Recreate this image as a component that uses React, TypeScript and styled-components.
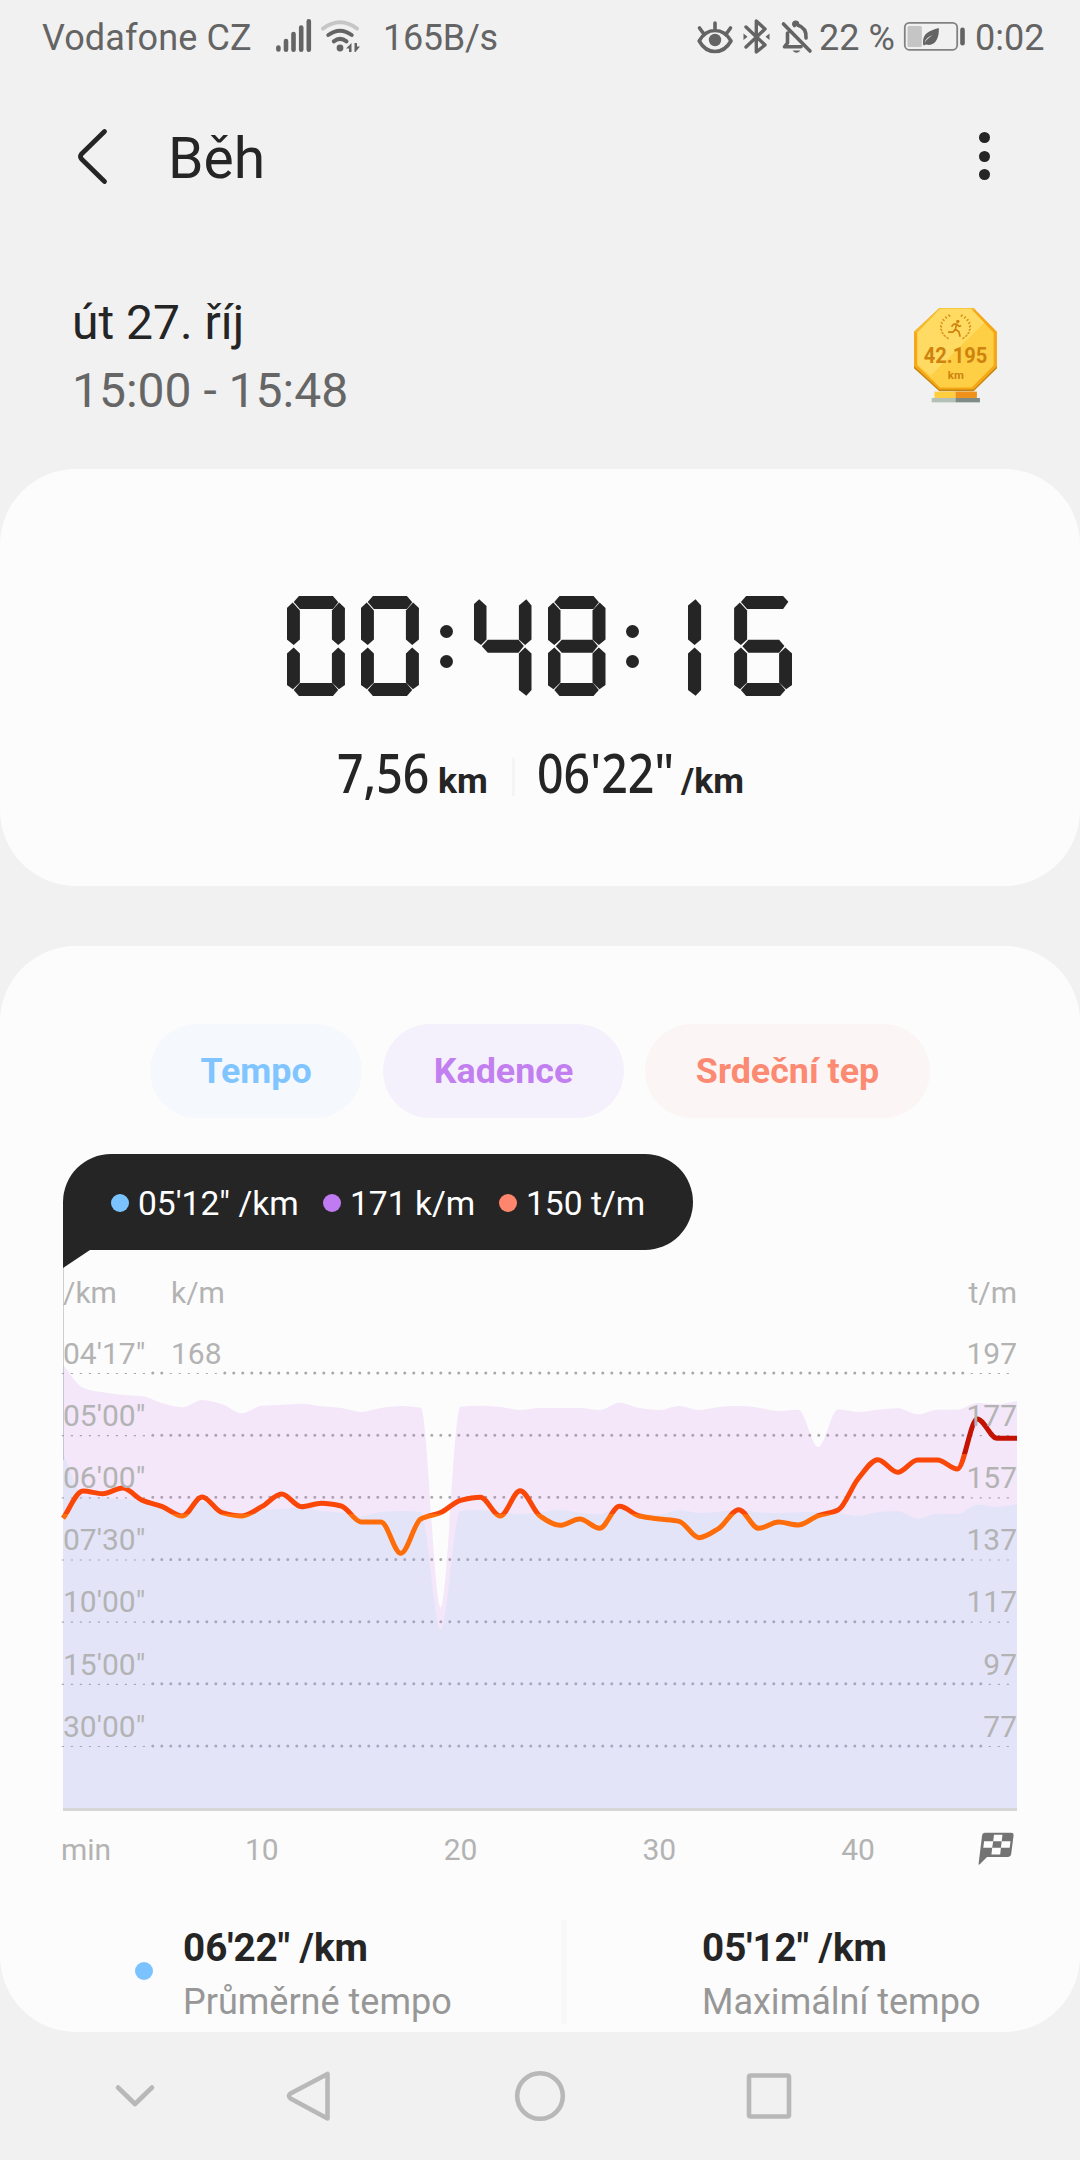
import React from "react";
import styled, { createGlobalStyle, css } from "styled-components";

const GlobalStyle = createGlobalStyle`
  * { box-sizing: border-box; }
  body { margin: 0; background: #f1f1f1; font-family: Roboto, "Liberation Sans", sans-serif; color: #252525; }
`;

const Screen = styled.main`
  width: 1080px;
  height: 2160px;
  display: flex;
  flex-direction: column;
  background: #f1f1f1;
  overflow: hidden;
`;

/* ---------- status bar ---------- */

const StatusBar = styled.header`
  height: 76px;
  display: flex;
  justify-content: space-between;
  padding: 0 34px 0 42px;
  color: #646464;
  font-size: 36px;
  line-height: 76px;
  white-space: nowrap;
`;
const StatusSide = styled.div`
  display: flex;
`;
const StatusText = styled.span<{ $w: number; $track?: number }>`
  width: ${(p) => p.$w}px;
  letter-spacing: ${(p) => p.$track ?? 0}px;
`;
const StatusIcon = styled.svg`
  flex: none;
  height: 76px;
  display: block;
`;

/* ---------- app bar ---------- */

const AppBar = styled.nav`
  height: 165px;
  display: flex;
  align-items: center;
  padding: 0 82px 0 74px;
`;
const BackIcon = styled.svg`
  width: 40px;
  height: 60px;
  margin-bottom: 5px;
`;
const Title = styled.h1`
  margin: 0 0 0 54px;
  flex: 1;
  font-size: 57px;
  font-weight: 400;
  line-height: 165px;
`;
const Kebab = styled.div`
  width: 28px;
  display: flex;
  flex-direction: column;
  align-items: center;
  gap: 7.6px;
  margin-bottom: 5px;
  i { width: 11px; height: 11px; border-radius: 50%; background: #252525; }
`;

/* ---------- summary ---------- */

const Summary = styled.section`
  height: 228px;
  display: flex;
  justify-content: space-between;
  padding: 48px 83px 0 72px;
`;
const DateBlock = styled.div`
  font-size: 48px;
  line-height: 68px;
`;
const TimeRange = styled.div`
  color: #666;
`;
const Trophy = styled.svg`
  width: 83px;
  height: 95px;
  margin-top: 19px;
`;

const Card = styled.section<{ $h: number }>`
  flex: none;
  height: ${(p) => p.$h}px;
  border-radius: 76px;
  background: #fcfcfc;
`;
const TimerCard = styled(Card)`
  padding-top: 127px;
  margin-bottom: 60px;
`;
const ChartCard = styled(Card)`
  padding: 78px 63px 0;
`;

/* ---------- seven-segment timer ---------- */

const Timer = styled.div`
  display: flex;
  justify-content: center;
  gap: 20.8px;
  height: 100px;
  margin-right: 1px;
`;
const Pair = styled.div`
  display: flex;
  gap: 16px;
`;
const Digit = styled.div`
  position: relative;
  width: 58px;
  height: 100px;
`;
const Segment = styled.i<{ $shape: string }>`
  position: absolute;
  inset: 0;
  background: #252525;
  clip-path: polygon(${(p) => p.$shape});
`;
const Colon = styled.div`
  width: 13px;
  padding-top: 29px;
  display: flex;
  flex-direction: column;
  gap: 17px;
  i { width: 13px; height: 13px; border-radius: 50%; background: #252525; }
`;

const seg = (...pts: number[][]) => pts.map(([x, y]) => `${x}px ${y}px`).join(", ");
const A = seg([6.8, 6], [12, 0], [46, 0], [51.4, 6.3], [46, 13], [13, 13]);
const A_OPEN = seg([6.8, 6], [12, 0], [49, 0], [54.3, 5.7], [49, 13], [13, 13]);
const F = seg([0, 12], [5.8, 6.5], [13, 14.5], [13, 43.5], [6.8, 49], [0, 43.5]);
const F_OPEN = seg([0, 8.5], [5.7, 3.3], [13, 10], [13, 43.5], [7.5, 49], [0, 43.5]);
const B = seg([58, 12], [52.2, 6.5], [45, 14.5], [45, 43.5], [51.3, 49], [58, 43.5]);
const B_OPEN = seg([58, 9.5], [52.8, 3.3], [45.4, 9.5], [45.4, 43.5], [51.6, 49], [58, 43.5]);
const E = seg([6.8, 51.5], [13, 57.5], [13, 86.5], [6, 93.3], [0, 89], [0, 57.5]);
const C = seg([51.3, 51.5], [45, 57.5], [45, 86.5], [52, 93.3], [58, 89], [58, 57.5]);
const C_OPEN = seg([51.6, 51.5], [45.4, 57.5], [45.4, 94], [52.8, 99.7], [58, 94], [58, 57.5]);
const D = seg([6.8, 94], [13, 87], [45.5, 87], [51.3, 94], [46, 100], [12, 100]);
const G = seg([8.3, 50.3], [14.3, 43.7], [45, 43.7], [50.3, 50], [45, 56.7], [14.3, 56.7]);
const ONE_TOP = seg([27.9, 9.5], [35.4, 3.3], [41, 9.5], [41, 43.5], [34.5, 49], [27.9, 43.5]);
const ONE_BOTTOM = seg([34.5, 51.5], [41, 57.5], [41, 94], [35.5, 99.7], [27.9, 94], [27.9, 57.5]);

const SEGMENTS: Record<string, string[]> = {
  "0": [A, B, C, D, E, F],
  "1": [ONE_TOP, ONE_BOTTOM],
  "4": [F_OPEN, G, B_OPEN, C_OPEN],
  "6": [A_OPEN, F, G, E, D, C],
  "8": [A, B, C, D, E, F, G],
};

function SevenSegment({ value }: { value: string }) {
  return (
    <Timer role="img" aria-label={value}>
      {value.split(":").map((pair, i) => (
        <React.Fragment key={i}>
          {i > 0 && <Colon><i /><i /></Colon>}
          <Pair>
            {pair.split("").map((d, j) => (
              <Digit key={j}>
                {SEGMENTS[d].map((s, k) => <Segment key={k} $shape={s} />)}
              </Digit>
            ))}
          </Pair>
        </React.Fragment>
      ))}
    </Timer>
  );
}

const Metrics = styled.div`
  display: flex;
  align-items: baseline;
  padding-left: 337px;
  margin-top: 38px;
  line-height: 76px;
  white-space: nowrap;
`;
const MetricValue = styled.span<{ $w: number }>`
  width: ${(p) => p.$w}px;
  font-family: "Noto Sans", sans-serif;
  font-size: 54px;
  font-weight: 500;
  transform: scaleX(0.86);
  transform-origin: left;
`;
const MetricUnit = styled.span<{ $w: number }>`
  width: ${(p) => p.$w}px;
  font-size: 35.5px;
  font-weight: 700;
`;
const MetricDivider = styled.span`
  width: 3px;
  height: 38px;
  margin-right: 22px;
  align-self: center;
  background: #f5f5f5;
`;

/* ---------- chart ---------- */

const Chips = styled.div`
  display: flex;
  justify-content: center;
  gap: 21px;
`;
const Chip = styled.button<{ $w: number; $fg: string; $bg: string }>`
  width: ${(p) => p.$w}px;
  height: 94px;
  border: 0;
  padding: 1px 0 0;
  border-radius: 47px;
  font: 700 35.8px/93px Roboto, sans-serif;
  color: ${(p) => p.$fg};
  background: ${(p) => p.$bg};
`;
const Tooltip = styled.div`
  position: relative;
  width: 630px;
  height: 96px;
  margin-top: 36px;
  padding: 3px 0 0 48px;
  display: flex;
  align-items: center;
  border-radius: 48px 48px 48px 0;
  background: #252525;
  color: #fff;
  font-size: 33.6px;
  white-space: nowrap;
  &::after {
    content: "";
    position: absolute;
    left: 0;
    top: 95px;
    width: 27px;
    height: 19px;
    background: #252525;
    clip-path: polygon(0 0, 100% 0, 100% 1px, 0 100%);
  }
`;
const Reading = styled.span<{ $w: number }>`
  width: ${(p) => p.$w}px;
  display: flex;
  align-items: center;
  gap: 9px;
  i { margin-bottom: 2px; }
`;
const Dot = styled.i<{ $c: string }>`
  flex: none;
  width: 18px;
  height: 18px;
  border-radius: 50%;
  background: ${(p) => p.$c};
`;
const Plot = styled.div`
  display: grid;
  height: 561px;
  > * { grid-area: 1 / 1; }
`;
const Curves = styled.svg`
  width: 954px;
  height: 561px;
  display: block;
  overflow: visible;
`;
const axisText = css`
  color: #b3b3b3;
  font-size: 30px;
`;
const Scale = styled.div`
  ${axisText}
  height: 561px;
  z-index: 1;
`;
const ScaleRow = styled.div<{ $h: number }>`
  height: ${(p) => p.$h}px;
  padding-top: 23px;
  line-height: 40px;
  display: grid;
  grid-template-columns: 108px 1fr auto;
  white-space: nowrap;
`;
const TimeAxis = styled.div`
  ${axisText}
  display: flex;
  height: 75px;
  line-height: 77px;
`;
const AxisUnit = styled.span`
  width: 99.4px;
  margin-left: -2px;
  margin-right: 2px;
`;
const Tick = styled.span`
  width: 198.75px;
  text-align: center;
`;
const Flag = styled.svg`
  width: 37px;
  height: 34px;
  margin: 21px 0 0 20.500px;
`;

const monotone = (ys: number[], step: number) => {
  const n = ys.length;
  const d = ys.slice(1).map((y, i) => (y - ys[i]) / step);
  const m = ys.map((_, i) => {
    if (i === 0) return d[0];
    if (i === n - 1) return d[n - 2];
    const a = d[i - 1];
    const b = d[i];
    return a * b <= 0 ? 0 : (2 * a * b) / (a + b);
  });
  let path = `M0 ${ys[0]}`;
  for (let i = 0; i < n - 1; i++) {
    const x0 = i * step;
    const x1 = x0 + step;
    path += `C${x0 + step / 3} ${ys[i] + (m[i] * step) / 3} ${x1 - step / 3} ${ys[i + 1] - (m[i + 1] * step) / 3} ${x1} ${ys[i + 1]}`;
  }
  return path;
};

/* samples are stored in thirds of a pixel below y = 70 */
const toY = (v: number) => 70 + v / 3;
const HEART = [595, 513, 521, 504, 541, 560, 588, 531, 578, 588, 560, 522, 560, 550, 558, 606, 606, 700, 597, 578, 541, 532, 588, 512, 588, 616, 597, 625, 559, 588, 597, 604, 653, 625, 569, 625, 606, 615, 587, 570, 477, 419, 457, 420, 420, 447, 297, 355, 355].map(toY);
const CADENCE = [135, 203, 217, 225, 229, 250, 262, 240, 253, 280, 257, 254, 251, 259, 264, 276, 264, 258, 263, 862, 260, 257, 261, 270, 264, 264, 264, 270, 248, 264, 270, 258, 270, 261, 258, 263, 273, 269, 381, 268, 276, 269, 265, 283, 269, 269, 249, 253, 243].map(toY);
const PACE = [398, 528, 533, 538, 543, 558, 575, 546, 565, 590, 568, 567, 560, 573, 578, 588, 576, 573, 577, 930, 573, 570, 576, 582, 577, 571, 578, 583, 560, 578, 584, 571, 579, 575, 570, 577, 580, 577, 576, 580, 588, 577, 574, 596, 581, 582, 554, 561, 552].map(toY);
const STEP = 954 / 48;
const GRID = [0, 1, 2, 3, 4, 5, 6].map((i) => 123 + i * 62.17);
const area = (ys: number[]) => `${monotone(ys, STEP)}V558H0Z`;

const ROWS = [
  ["04'17\"", "168", "197"],
  ["05'00\"", "", "177"],
  ["06'00\"", "", "157"],
  ["07'30\"", "", "137"],
  ["10'00\"", "", "117"],
  ["15'00\"", "", "97"],
  ["30'00\"", "", "77"],
];

function RunPlot() {
  return (
    <Plot>
      <Curves viewBox="0 0 954 561">
        <defs>
          <linearGradient id="zones" gradientUnits="userSpaceOnUse" x1="0" y1="204" x2="0" y2="264">
            <stop offset="0" stopColor="#c41200" />
            <stop offset="0" stopColor="#fa4607" />
            <stop offset="1" stopColor="#fa4607" />
            <stop offset="1" stopColor="#ff6d0a" />
          </linearGradient>
        </defs>
        <path d="M.5 17V210" stroke="#cfcfd2" strokeWidth="1" />
        {GRID.map((y, i) => {
          const right = i > 4 ? 922 : 904;
          return (
            <g key={y} stroke="#a9a9a9">
              {i === 0 ? (
                <>
                  <path d={`M89.8 ${y}H103`} strokeWidth="3" strokeLinecap="round" strokeDasharray="0 9" />
                  <path d={`M106.8 ${y + 0.5}H158`} strokeWidth="1" strokeDasharray="2 7" />
                  <path d={`M161.8 ${y}H${right}`} strokeWidth="3" strokeLinecap="round" strokeDasharray="0 9" />
                </>
              ) : (
                <path d={`M89.8 ${y}H${right}`} strokeWidth="3" strokeLinecap="round" strokeDasharray="0 9" />
              )}
              <path d={`M-1.2 ${y + 0.5}H84`} strokeWidth="1.2" strokeDasharray="2.2 6.8" />
              <path d={`M${i > 4 ? 925.7 : 907.7} ${y + 0.5}H950`} strokeWidth="1.2" strokeDasharray="2.2 6.8" />
            </g>
          );
        })}
        <path d={area(CADENCE)} fill="#c173e8" fillOpacity=".15" />
        <path d={area(PACE)} fill="#80d4ff" fillOpacity=".13" />
        <path d="M0 559.5H954" stroke="#d6d6d6" strokeWidth="3" />
        <path d={monotone(HEART, STEP)} fill="none" stroke="url(#zones)" strokeWidth="5" />
      </Curves>
      <Scale>
        <ScaleRow $h={60.8}>
          <span>/km</span><span>k/m</span><span>t/m</span>
        </ScaleRow>
        {ROWS.map(([pace, cadence, heart]) => (
          <ScaleRow key={pace} $h={62.17}>
            <span>{pace}</span><span>{cadence}</span><span>{heart}</span>
          </ScaleRow>
        ))}
      </Scale>
    </Plot>
  );
}

/* ---------- stats ---------- */

const Stats = styled.div`
  display: flex;
  height: 104px;
  margin: 34px -63px 0 72px;
  white-space: nowrap;
`;
const Stat = styled.div<{ $w: number; $pad: number }>`
  width: ${(p) => p.$w}px;
  padding-left: ${(p) => p.$pad}px;
  display: flex;
  align-items: center;
  gap: 30px;
  > i { margin-bottom: 2px; }
`;
const StatBody = styled.div`
  display: flex;
  flex-direction: column;
  align-self: flex-start;
  padding-top: 2px;
`;
const StatValue = styled.strong`
  font-size: 38.6px;
  line-height: 52px;
`;
const StatLabel = styled.span`
  font-size: 36px;
  line-height: 56px;
  color: #979797;
`;
const StatDivider = styled.i`
  width: 6px;
  background: #f8f8f8;
`;

const NavBar = styled.footer`
  height: 128px;
  svg { display: block; width: 1080px; height: 128px; }
`;

const Leaves = () => (
  <g stroke="#d8951f" strokeWidth="4.5" strokeLinecap="round" fill="none">
    {[0, 1, 2, 3, 4, 5, 6, 7, 8].map((i) => {
      const a = ((122 + i * 15.500) * Math.PI) / 180;
      const x = 42 * Math.cos(a);
      const y = 38 * Math.sin(a);
      return (
        <g key={i}>
          <path d={`M${226 + x} ${143 + y}l-3 -3`} />
          <path d={`M${226 - x} ${143 + y}l3 -3`} />
        </g>
      );
    })}
  </g>
);

export default function App() {
  return (
    <Screen>
      <GlobalStyle />
      <StatusBar>
        <StatusSide>
          <StatusText $w={231} $track={0.1}>Vodafone CZ</StatusText>
          <StatusIcon width="110" viewBox="273 0 110 76" fill="none" stroke="#646464" strokeLinecap="round">
            <path d="M278.4 47.5V49.5M286 41V49.8M293.5 34V49.8M301.2 27.5V49.8M308.8 21.2V49.8" strokeWidth="4.6" />
            <path d="M323 28.5Q340 16 357 28.5" stroke="#c6c6c6" strokeWidth="4" />
            <path d="M328.3 35Q340 26.5 351.7 35M333.8 41.3Q340 36.5 346.5 41.3" strokeWidth="4" />
            <circle cx="340" cy="48" r="3.4" fill="#646464" stroke="none" />
            <path d="M346 48.5L351.5 43V52H349V48.5ZM354.5 43H357V46.5H360L355.5 52H354.5Z" fill="#646464" stroke="none" />
          </StatusIcon>
          <StatusText $w={120} $track={-0.3}>165B/s</StatusText>
        </StatusSide>
        <StatusSide>
          <StatusIcon width="124" viewBox="695 0 124 76" fill="none" stroke="#646464" strokeWidth="3.6" strokeLinecap="round" strokeLinejoin="round">
            <path d="M699.2 41C707 27 723 27 731 41C723 55 707 55 699.2 41ZM715 23V29M699.5 28L703.5 33.5M730.5 28L726.5 33.5" />
            <circle cx="715" cy="40" r="6.2" fill="#646464" stroke="none" />
            <path d="M746 27L765 45L756.3 52V21L765 29L746 47" strokeWidth="3.4" />
            <path d="M743.5 33.5L747.5 36.7L743.5 40ZM769.5 33.5L765.5 36.7L769.5 40Z" fill="#646464" stroke="none" />
            <path d="M783.5 24L810 51M787.5 33V43L784.5 46.8H801M794.5 25.5C791.5 22 798.5 20.5 797.5 25C804 27 806.5 31 806 38" />
            <path d="M792.5 50.5H800.5Q796.5 55 792.5 50.5Z" fill="#646464" stroke="none" />
          </StatusIcon>
          <StatusText $w={83}>22 %</StatusText>
          <StatusIcon width="73" viewBox="902 0 73 76">
            <rect x="904.8" y="22.8" width="52.4" height="27" rx="4.5" fill="none" stroke="#828282" strokeWidth="1.8" />
            <rect x="907.5" y="26" width="14.3" height="21" rx="1.5" fill="#c5c5c5" />
            <path d="M923 43.5C922.5 33 929 31 938.8 28C939.5 38 935 47 926 44.5L923.5 45.5ZM924.5 43C926.5 39.5 929.5 37 933 35C928.5 36.5 925.5 39 924.5 43Z" fill="#646464" fillRule="evenodd" />
            <rect x="960.2" y="27.5" width="4.6" height="18" rx="2.2" fill="#646464" />
          </StatusIcon>
          <StatusText $w={71}>0:02</StatusText>
        </StatusSide>
      </StatusBar>

      <AppBar>
        <BackIcon viewBox="0 0 40 60" fill="none" stroke="#252525" strokeWidth="4.8" strokeLinecap="round" strokeLinejoin="round">
          <path d="M30.500 5.500L7.500 28Q5.500 30.500 7.500 33L30.500 55.500" />
        </BackIcon>
        <Title>Běh</Title>
        <Kebab><i /><i /><i /></Kebab>
      </AppBar>

      <Summary>
        <DateBlock>
          út 27. říj
          <TimeRange>15:00 - 15:48</TimeRange>
        </DateBlock>
        <Trophy viewBox="102 84 248 284">
          <path d="M178 84H280L350 155V262L280 332H178L102 262V155Z" fill="#f5a718" />
          <path d="M102 258L178 328H280L350 258V264L280 333H178L102 264Z" fill="#c5850c" />
          <path d="M178 84H280L286 90L226 96L112 160L102 155Z" fill="#f3bb30" />
          <path d="M180 86H272L340 158V256L274 322H180L112 256V158Z" fill="#fecf45" />
          <path d="M180 86H272L312 128L152 286L112 252V158Z" fill="#ffdb63" />
          <rect x="163" y="334" width="63" height="19" fill="#ffce3e" />
          <rect x="226" y="334" width="64" height="19" fill="#f0911c" />
          <rect x="155" y="353" width="71" height="13" fill="#b3c0b8" />
          <rect x="226" y="353" width="73" height="13" fill="#7f8b86" />
          <Leaves />
          <circle cx="233" cy="124" r="5" fill="#cf830f" />
          <path d="M229 131L226 147L236 155L240 170M226 147L218 156H204M214 140L221 132L230 132L236 139L243 137" fill="none" stroke="#cf830f" strokeWidth="5" />
          <text x="226" y="249" textAnchor="middle" textLength="190" lengthAdjust="spacingAndGlyphs" fontFamily="Roboto" fontWeight="700" fontSize="65" fill="#cf830f">42.195</text>
          <text x="227" y="295" textAnchor="middle" textLength="48" lengthAdjust="spacingAndGlyphs" fontFamily="Roboto" fontWeight="700" fontSize="35" fill="#cf830f">km</text>
        </Trophy>
      </Summary>

      <TimerCard $h={417}>
        <SevenSegment value="00:48:16" />
        <Metrics>
          <MetricValue $w={101}>7,56</MetricValue>
          <MetricUnit $w={74}>km</MetricUnit>
          <MetricDivider />
          <MetricValue $w={144}>06'22"</MetricValue>
          <MetricUnit $w={64}>/km</MetricUnit>
        </Metrics>
      </TimerCard>

      <ChartCard $h={1086}>
        <Chips>
          <Chip $w={212} $fg="#80c5ff" $bg="#f5f9fd">Tempo</Chip>
          <Chip $w={241} $fg="#c17ff0" $bg="#f5f1fc">Kadence</Chip>
          <Chip $w={285} $fg="#fc8a72" $bg="#fcf5f5">Srdeční tep</Chip>
        </Chips>
        <Tooltip>
          <Reading $w={212}><Dot $c="#7ac3ff" />05'12" /km</Reading>
          <Reading $w={176}><Dot $c="#c17bf2" />171 k/m</Reading>
          <Reading $w={150}><Dot $c="#ff866c" />150 t/m</Reading>
        </Tooltip>
        <RunPlot />
        <TimeAxis>
          <AxisUnit>min</AxisUnit>
          <Tick>10</Tick>
          <Tick>20</Tick>
          <Tick>30</Tick>
          <Tick>40</Tick>
          <Flag viewBox="0 0 37 34">
            <path d="M7 .8H33Q36 .8 35.5 4L33.2 22Q32.7 25 29.5 25H9L1.5 32.5H.5L4 4Q4.5 .8 7 .8Z" fill="#737373" />
            <path d="M16 2.8H24.5L23.7 9.3H32.5L31.7 15.8H22.9L22.2 22.5H13.4L14.2 15.8H5.3L6.1 9.3H15.2ZM15.2 9.3L14.2 15.8H22.9L23.7 9.3Z" fill="#fcfcfc" fillRule="evenodd" />
          </Flag>
        </TimeAxis>
        <Stats>
          <Stat $w={426} $pad={0}>
            <Dot $c="#7ac3ff" />
            <StatBody><StatValue>06'22" /km</StatValue><StatLabel>Průměrné tempo</StatLabel></StatBody>
          </Stat>
          <StatDivider />
          <Stat $w={450} $pad={135}>
            <StatBody><StatValue>05'12" /km</StatValue><StatLabel>Maximální tempo</StatLabel></StatBody>
          </Stat>
        </Stats>
      </ChartCard>

      <NavBar>
        <svg viewBox="0 2032 1080 128" fill="none" stroke="#b8b8b8" strokeWidth="4.6" strokeLinecap="round" strokeLinejoin="round">
          <path d="M118 2087.5L135 2104L152 2087.5" />
          <path d="M327.5 2074V2118.5L290.5 2098.5Q287.5 2096 290.5 2093.5Z" />
          <circle cx="540" cy="2096" r="22.8" />
          <rect x="749" y="2075.5" width="40" height="41" rx="1.5" />
        </svg>
      </NavBar>
    </Screen>
  );
}
